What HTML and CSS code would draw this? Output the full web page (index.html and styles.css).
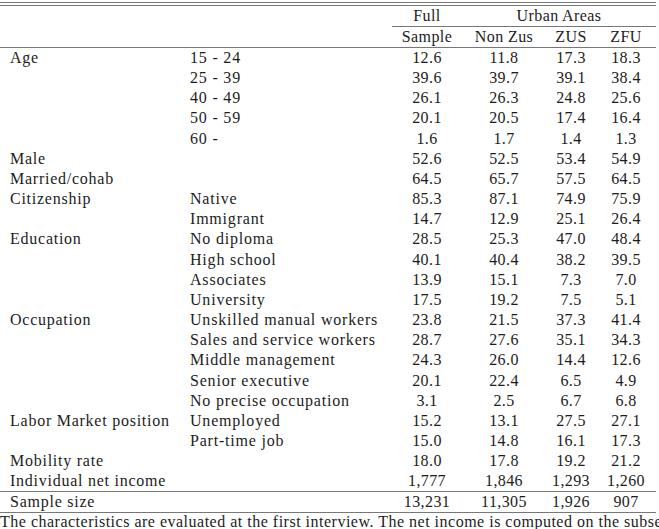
FILE: index.html
```html
<!DOCTYPE html>
<html lang="en">
<head>
  <meta charset="UTF-8" />
  <meta name="viewport" content="width=device-width, initial-scale=1.0" />
  <title>Descriptive statistics</title>
  <link rel="stylesheet" href="styles.css">
</head>
<body>
  <table class="stats">
    <colgroup>
      <col class="c-label">
      <col class="c-sub">
      <col class="c-full">
      <col class="c-nonzus">
      <col class="c-zus">
      <col class="c-zfu">
    </colgroup>
    <thead>
      <tr class="head-top">
        <th class="lbl"></th>
        <th class="sub"></th>
        <th class="num rule">Full</th>
        <th class="num rule" colspan="3">Urban Areas</th>
      </tr>
      <tr class="head-bottom">
        <th class="lbl"></th>
        <th class="sub"></th>
        <th class="num">Sample</th>
        <th class="num">Non Zus</th>
        <th class="num">ZUS</th>
        <th class="num">ZFU</th>
      </tr>
    </thead>
    <tbody>
      <tr><td class="lbl">Age</td><td class="sub">15 - 24</td><td class="num">12.6</td><td class="num">11.8</td><td class="num">17.3</td><td class="num">18.3</td></tr>
      <tr><td class="lbl"></td><td class="sub">25 - 39</td><td class="num">39.6</td><td class="num">39.7</td><td class="num">39.1</td><td class="num">38.4</td></tr>
      <tr><td class="lbl"></td><td class="sub">40 - 49</td><td class="num">26.1</td><td class="num">26.3</td><td class="num">24.8</td><td class="num">25.6</td></tr>
      <tr><td class="lbl"></td><td class="sub">50 - 59</td><td class="num">20.1</td><td class="num">20.5</td><td class="num">17.4</td><td class="num">16.4</td></tr>
      <tr><td class="lbl"></td><td class="sub">60 -</td><td class="num">1.6</td><td class="num">1.7</td><td class="num">1.4</td><td class="num">1.3</td></tr>
      <tr><td class="lbl">Male</td><td class="sub"></td><td class="num">52.6</td><td class="num">52.5</td><td class="num">53.4</td><td class="num">54.9</td></tr>
      <tr><td class="lbl">Married/cohab</td><td class="sub"></td><td class="num">64.5</td><td class="num">65.7</td><td class="num">57.5</td><td class="num">64.5</td></tr>
      <tr><td class="lbl">Citizenship</td><td class="sub">Native</td><td class="num">85.3</td><td class="num">87.1</td><td class="num">74.9</td><td class="num">75.9</td></tr>
      <tr><td class="lbl"></td><td class="sub">Immigrant</td><td class="num">14.7</td><td class="num">12.9</td><td class="num">25.1</td><td class="num">26.4</td></tr>
      <tr><td class="lbl">Education</td><td class="sub">No diploma</td><td class="num">28.5</td><td class="num">25.3</td><td class="num">47.0</td><td class="num">48.4</td></tr>
      <tr><td class="lbl"></td><td class="sub">High school</td><td class="num">40.1</td><td class="num">40.4</td><td class="num">38.2</td><td class="num">39.5</td></tr>
      <tr><td class="lbl"></td><td class="sub">Associates</td><td class="num">13.9</td><td class="num">15.1</td><td class="num">7.3</td><td class="num">7.0</td></tr>
      <tr><td class="lbl"></td><td class="sub">University</td><td class="num">17.5</td><td class="num">19.2</td><td class="num">7.5</td><td class="num">5.1</td></tr>
      <tr><td class="lbl">Occupation</td><td class="sub">Unskilled manual workers</td><td class="num">23.8</td><td class="num">21.5</td><td class="num">37.3</td><td class="num">41.4</td></tr>
      <tr><td class="lbl"></td><td class="sub">Sales and service workers</td><td class="num">28.7</td><td class="num">27.6</td><td class="num">35.1</td><td class="num">34.3</td></tr>
      <tr><td class="lbl"></td><td class="sub">Middle management</td><td class="num">24.3</td><td class="num">26.0</td><td class="num">14.4</td><td class="num">12.6</td></tr>
      <tr><td class="lbl"></td><td class="sub">Senior executive</td><td class="num">20.1</td><td class="num">22.4</td><td class="num">6.5</td><td class="num">4.9</td></tr>
      <tr><td class="lbl"></td><td class="sub">No precise occupation</td><td class="num">3.1</td><td class="num">2.5</td><td class="num">6.7</td><td class="num">6.8</td></tr>
      <tr><td class="lbl">Labor Market position</td><td class="sub">Unemployed</td><td class="num">15.2</td><td class="num">13.1</td><td class="num">27.5</td><td class="num">27.1</td></tr>
      <tr><td class="lbl"></td><td class="sub">Part-time job</td><td class="num">15.0</td><td class="num">14.8</td><td class="num">16.1</td><td class="num">17.3</td></tr>
      <tr><td class="lbl">Mobility rate</td><td class="sub"></td><td class="num">18.0</td><td class="num">17.8</td><td class="num">19.2</td><td class="num">21.2</td></tr>
      <tr><td class="lbl">Individual net income</td><td class="sub"></td><td class="num">1,777</td><td class="num">1,846</td><td class="num">1,293</td><td class="num">1,260</td></tr>
    </tbody>
    <tfoot>
      <tr class="total">
        <td class="lbl">Sample size</td>
        <td class="sub"></td>
        <td class="num">13,231</td>
        <td class="num">11,305</td>
        <td class="num">1,926</td>
        <td class="num">907</td>
      </tr>
    </tfoot>
  </table>
  <p class="note">The characteristics are evaluated at the first interview. The net income is computed on the subset</p>
</body>
</html>
```

FILE: styles.css
```css
:root {
  --ink: #1c1c1c;
  --rule: #777777;
}

* {
  box-sizing: content-box;
}

body {
  margin: 0;
  padding-top: 2px;
  background: #ffffff;
  color: var(--ink);
  font-family: 'Liberation Serif', 'Times New Roman', serif;
  font-size: 16px;
  overflow: hidden;
}

.stats {
  border-collapse: separate;
  border-spacing: 0;
  table-layout: fixed;
  width: 656px;
}

.c-label { width: 185px; }
.c-sub { width: 207px; }
.c-full { width: 70px; }
.c-nonzus { width: 84px; }
.c-zus { width: 50px; }
.c-zfu { width: 60px; }

.stats th,
.stats td {
  padding: 0;
  font-weight: normal;
  white-space: nowrap;
  vertical-align: middle;
}

.stats tbody td {
  height: 20.15px;
  line-height: 20.15px;
}

.stats thead th,
.stats tfoot td {
  height: 20px;
  line-height: 20px;
}

.lbl {
  text-align: left;
  letter-spacing: 0.75px;
  padding-left: 10px !important;
}

.sub {
  text-align: left;
  letter-spacing: 0.8px;
  padding-left: 5px !important;
}

.num {
  text-align: center;
  letter-spacing: 0.4px;
}

.head-top th {
  border-top: 4px double var(--rule);
  border-bottom: 1px solid transparent;
}

.head-top th.rule {
  border-bottom-color: var(--rule);
}

.head-bottom th {
  border-bottom: 1px solid var(--rule);
}

.total td {
  border-top: 1px solid var(--rule);
  border-bottom: 1px solid var(--rule);
}

.note {
  margin: 0;
  white-space: nowrap;
  letter-spacing: 0.5px;
  line-height: 18px;
}
```
